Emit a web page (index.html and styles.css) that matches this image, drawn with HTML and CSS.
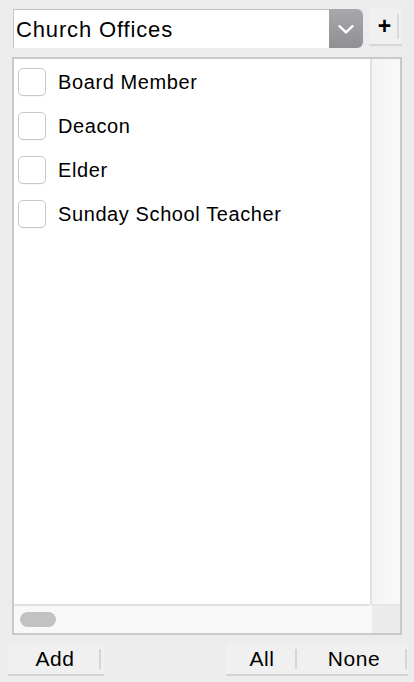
FILE: index.html
```html
<!DOCTYPE html>
<html lang="en">
<head>
<meta charset="utf-8">
<title>Church Offices</title>
<link rel="stylesheet" href="styles.css">
</head>
<body>
<div class="panel">
  <div class="toolbar">
    <div class="select">
      <div class="select-text">Church Offices</div>
      <div class="select-btn">
        <svg width="16" height="9" viewBox="0 0 16 9"><path d="M1.5 1.2 L8 7.4 L14.5 1.2" fill="none" stroke="#fff" stroke-width="2.4" stroke-linecap="round" stroke-linejoin="round"/></svg>
      </div>
    </div>
    <div class="plus"><span class="plus-label">+</span></div>
  </div>

  <div class="listbox">
    <div class="list">
      <label class="row"><span class="check"></span><span class="label">Board Member</span></label>
      <label class="row"><span class="check"></span><span class="label">Deacon</span></label>
      <label class="row"><span class="check"></span><span class="label">Elder</span></label>
      <label class="row"><span class="check"></span><span class="label">Sunday School Teacher</span></label>
    </div>
    <div class="vscroll"></div>
    <div class="hscroll"><div class="thumb"></div></div>
    <div class="corner"></div>
  </div>

  <div class="footer">
    <div class="btn btn-add"><span class="btn-label">Add</span></div>
    <div class="btn-group">
      <div class="btn btn-all"><span class="btn-label">All</span></div>
      <div class="btn btn-none"><span class="btn-label">None</span></div>
    </div>
  </div>
</div>
</body>
</html>
```

FILE: styles.css
```css
* { box-sizing: border-box; }

html, body {
  margin: 0;
  padding: 0;
  background: #ececec;
}

body {
  font-family: "Liberation Sans", Arial, Helvetica, sans-serif;
  color: #000;
  width: 414px;
  height: 682px;
  overflow: hidden;
}

.panel {
  display: flex;
  flex-direction: column;
  padding: 8px 0 0 0;
}

/* ---------- top toolbar ---------- */
.toolbar {
  display: flex;
  align-items: flex-start;
  margin-left: 13px;
  gap: 6px;
}

.select {
  display: flex;
  width: 350px;
  height: 39px;
  margin-top: 1px;
}

.select-text {
  flex: 1;
  background: #fff;
  border-top: 1px solid #c4c4c4;
  border-left: 1px solid #c4c4c4;
  padding: 3px 0 0 2px;
  font-size: 22px;
  letter-spacing: 0.85px;
  line-height: 34px;
  white-space: nowrap;
}

.select-btn {
  width: 34px;
  background: linear-gradient(#a8a8ac, #8f8f94);
  border-radius: 0 6px 6px 0;
  display: flex;
  align-items: center;
  justify-content: center;
  padding-top: 2px;
}

.plus {
  display: flex;
  align-items: center;
  width: 33px;
  height: 38px;
  background: #f0f0f0;
  border-bottom: 2px solid #d6d6d6;
}

.plus-label {
  flex: 1;
  text-align: center;
  font-size: 23px;
  font-weight: bold;
  line-height: 36px;
  padding-left: 3px;
  color: #000;
}

.plus::after {
  content: "";
  width: 2px;
  height: 25px;
  background: #d9d9d9;
  margin-right: 3px;
}

/* ---------- list box ---------- */
.listbox {
  margin: 9px 12px 0 12px;
  width: 390px;
  height: 578px;
  border: 2px solid #c9c9c9;
  display: grid;
  grid-template-columns: 1fr 30px;
  grid-template-rows: 1fr 29px;
}

.list {
  background: #fff;
  padding: 1px 0 0 4px;
  display: flex;
  flex-direction: column;
}

.row {
  display: flex;
  align-items: center;
  height: 44px;
  gap: 12px;
}

.check {
  width: 28px;
  height: 28px;
  border: 1px solid #c8c8c8;
  border-radius: 5px;
  background: #fff;
  box-shadow: 0 1px 0 rgba(0,0,0,0.03);
}

.label {
  font-size: 20px;
  letter-spacing: 0.6px;
}

.vscroll {
  background: linear-gradient(90deg, #f4f4f4, #f9f9f9);
  border-left: 2px solid #e1e1e1;
}

.hscroll {
  background: #f8f8f8;
  border-top: 2px solid #e1e1e1;
  padding: 6px 0 0 6px;
}

.thumb {
  width: 36px;
  height: 15px;
  border-radius: 8px;
  background: #c2c2c2;
}

.corner {
  background: #ebebeb;
  border-top: 2px solid #e6e6e6;
  border-left: 2px solid #f6f6f6;
}

/* ---------- footer buttons ---------- */
.footer {
  display: flex;
  justify-content: space-between;
  margin: 9px 6px 0 8px;
}

.btn-group {
  display: flex;
}

.btn {
  display: flex;
  align-items: center;
  height: 32px;
  background: #f0f0f0;
  border-bottom: 2px solid #d3d3d3;
  font-size: 21px;
  letter-spacing: 0.6px;
  color: #000;
}

.btn::after {
  content: "";
  width: 2px;
  height: 20px;
  background: #d6d6d6;
  margin-right: 3px;
}

.btn-label {
  flex: 1;
  text-align: center;
  padding-left: 3px;
}

.btn-add { width: 96px; }
.btn-all { width: 74px; }
.btn-none { width: 108px; }
.btn-none::after { margin-right: 1px; }
```
